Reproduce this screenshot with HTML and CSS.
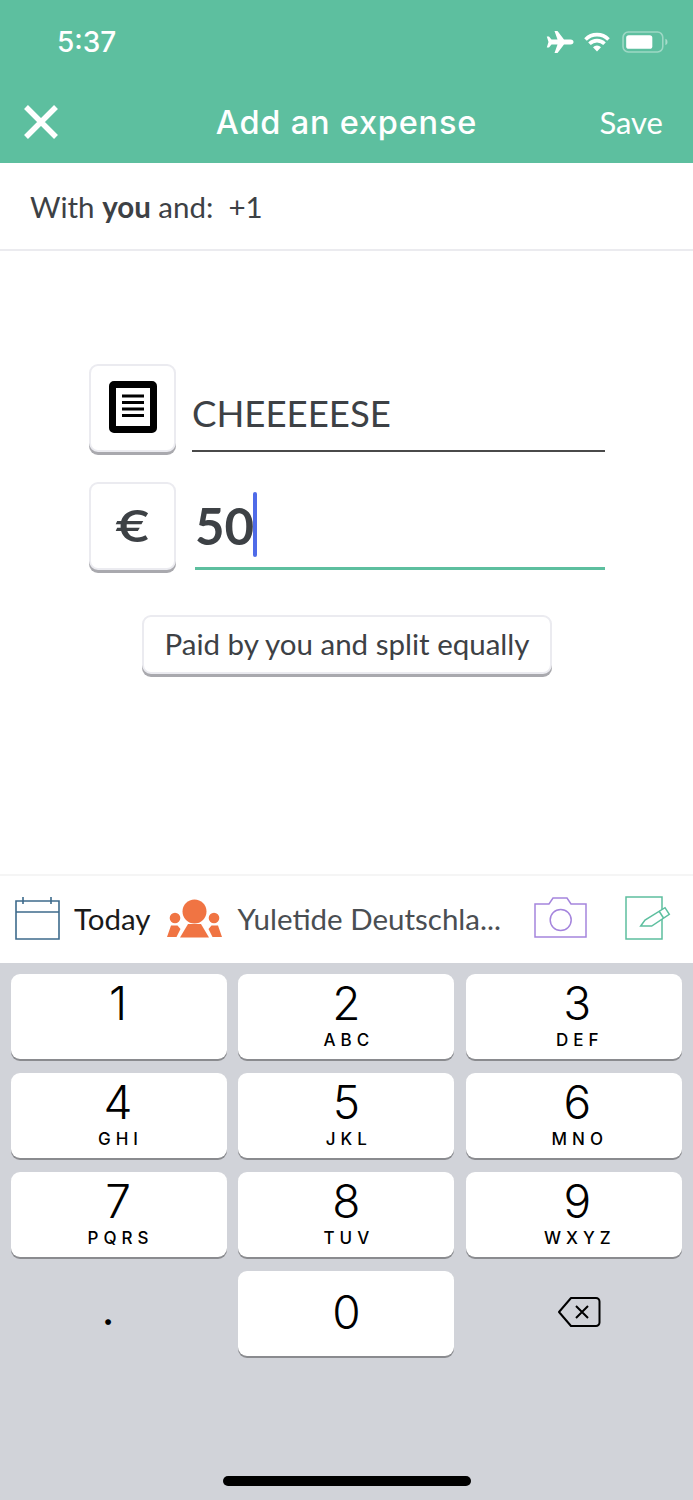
FILE: index.html
```html
<!DOCTYPE html>
<html lang="en">
<head>
  <meta charset="UTF-8" />
  <title>Add an expense</title>
  <link rel="stylesheet" href="styles.css">
</head>
<body>
  <div class="screen">
    <header class="top">
      <div class="status">
        <span class="time">5:37</span>
        <div class="status-icons">
          <svg class="plane" width="28" height="24" viewBox="0 0 28 24"><path d="M8.500 1h3l6.500 8.500h6.500c2 0 3 1.200 3 2.500s-1 2.500-3 2.500H18L11.500 23h-3l3-8.500H5.500L3 17.500H.8L2.500 12 .8 6.500H3L5.500 9.500h6z" fill="#fff"/></svg>
          <svg class="wifi" width="26" height="20" viewBox="0 0 26 20"><path d="M1.500 7.500a16 16 0 0 1 23 0M5.500 11.800a10.500 10.500 0 0 1 15 0" fill="none" stroke="#fff" stroke-width="3.600"/><path d="M13 19.500l-4-4.200a5.600 5.600 0 0 1 8 0z" fill="#fff"/></svg>
          <svg class="battery" width="46" height="22" viewBox="0 0 44 21"><rect x="1" y="1" width="38" height="19" rx="5" fill="none" stroke="#fff" stroke-opacity=".4" stroke-width="1.500"/><rect x="4" y="4" width="25" height="13" rx="2.500" fill="#fff"/><path d="M41.500 7.500c1.500.5 2 1.700 2 3s-.5 2.500-2 3z" fill="#fff" fill-opacity=".45"/></svg>
        </div>
      </div>
      <div class="navbar">
        <svg class="close" width="36" height="36" viewBox="0 0 36 36"><path d="M3 3l30 30M33 3L3 33" stroke="#fff" stroke-width="5.500" fill="none"/></svg>
        <h1>Add an expense</h1>
        <span class="save">Save</span>
      </div>
    </header>

    <div class="with-row"><span>With <b>you</b> and:&nbsp; +1</span></div>

    <main class="form">
      <div class="field-row desc-row">
        <div class="icon-btn doc">
          <svg width="48" height="52" viewBox="0 0 48 52"><rect x="3.500" y="3.500" width="41" height="45" rx="1.500" fill="#fff" stroke="#000" stroke-width="7"/><path d="M13 15h22M13 21.500h22M13 28h22M13 34.500h22" stroke="#000" stroke-width="2.800"/></svg>
        </div>
        <div class="input desc-input">CHEEEEESE</div>
      </div>
      <div class="field-row amount-row">
        <div class="icon-btn euro"><span>€</span></div>
        <div class="input amount-input"><span>50</span><i class="caret"></i></div>
      </div>
      <div class="split-btn">Paid by you and split equally</div>
    </main>

    <div class="toolbar">
      <svg class="cal" width="45" height="43" viewBox="0 0 45 43"><path d="M1 4h43v38H1zM1 15h43M8 0v7M36 0v7" fill="none" stroke="#3e6b8c" stroke-width="1.600"/></svg>
      <span class="today">Today</span>
      <svg class="group" width="55" height="39" viewBox="0 0 55 39"><g fill="#f07443"><circle cx="27.500" cy="12.500" r="12"/><circle cx="8" cy="19" r="5.300"/><circle cx="47" cy="19" r="5.300"/><path d="M21 25h13l8 13.500H13z"/><path d="M4 26.500h6.500l3 3.500-4 8H0zM44.500 26.500H51l4 11.500h-9.500l-4-8z"/></g></svg>
      <span class="group-name">Yuletide Deutschla...</span>
      <svg class="camera" width="53" height="42" viewBox="0 0 53 42"><path d="M1 7h14l4-6h14l4 6h15v33H1z" fill="none" stroke="#a585dd" stroke-width="1.500"/><circle cx="26.700" cy="23" r="10.500" fill="none" stroke="#a585dd" stroke-width="1.500"/></svg>
      <svg class="note" width="46" height="44" viewBox="0 0 46 44"><path d="M1 1h36v42H1z" fill="none" stroke="#5dbf9f" stroke-width="1.500"/><path d="M15.700 30l4.300-6 20-12.300 4.300 6.600L26.700 30z" fill="#fff" stroke="#5dbf9f" stroke-width="1.500"/><path d="M34 15l4.500 7" stroke="#5dbf9f" stroke-width="1.500"/></svg>
    </div>

    <section class="keyboard">
      <div class="keys">
        <div class="key"><span class="num">1</span></div>
        <div class="key"><span class="num">2</span><span class="abc">ABC</span></div>
        <div class="key"><span class="num">3</span><span class="abc">DEF</span></div>
        <div class="key"><span class="num">4</span><span class="abc">GHI</span></div>
        <div class="key"><span class="num">5</span><span class="abc">JKL</span></div>
        <div class="key"><span class="num">6</span><span class="abc">MNO</span></div>
        <div class="key"><span class="num">7</span><span class="abc">PQRS</span></div>
        <div class="key"><span class="num">8</span><span class="abc">TUV</span></div>
        <div class="key"><span class="num">9</span><span class="abc">WXYZ</span></div>
        <div class="key blank dot-key"><span class="dot">.</span></div>
        <div class="key zero"><span class="num">0</span></div>
        <div class="key blank back-key">
          <svg width="44" height="32" viewBox="0 0 44 32"><path d="M14 2h25a3.500 3.500 0 0 1 3.500 3.500v21a3.500 3.500 0 0 1-3.500 3.500H14L2 16z" fill="none" stroke="#000" stroke-width="2" stroke-linejoin="round"/><path d="M19 10l12 12M31 10L19 22" stroke="#000" stroke-width="2"/></svg>
        </div>
      </div>
      <div class="home-bar"></div>
    </section>
  </div>
</body>
</html>
```

FILE: styles.css
```css
* {
  box-sizing: border-box;
}
body {
  margin: 0;
  font-family: 'Lato', sans-serif;
  color: #3d4145;
  background: #fff;
}
.screen {
  width: 693px;
  height: 1500px;
  display: flex;
  flex-direction: column;
  overflow: hidden;
}
.top {
  height: 163px;
  background: #5dbf9f;
  color: #fff;
}
.status {
  height: 84px;
  padding: 24px 25px 0 57px;
  display: flex;
  justify-content: space-between;
  align-items: flex-start;
}
.time {
  font-family: 'Inter', sans-serif;
  font-size: 28px;
  font-weight: 500;
  line-height: 36px;
}
.status-icons {
  display: flex;
  align-items: center;
  height: 36px;
}
.wifi {
  margin: 0 12px 0 10px;
}
.navbar {
  display: grid;
  grid-template-columns: 1fr auto 1fr;
  align-items: center;
  padding: 0 30px;
  height: 76px;
}
.close {
  margin-left: -7px;
}
.navbar h1 {
  margin: 0;
  font-family: 'Inter', sans-serif;
  font-size: 32.500px;
  font-weight: 500;
  letter-spacing: 0.8px;
}
.save {
  font-size: 31px;
  text-align: right;
}
.with-row {
  height: 88px;
  padding: 0 30px;
  display: flex;
  align-items: center;
  font-size: 29.500px;
  border-bottom: 2px solid #ebebef;
}
.form {
  flex: 1;
  padding: 113px 88px 0 89px;
}
.field-row {
  display: flex;
  align-items: stretch;
  height: 88px;
}
.desc-row {
  gap: 16px;
  margin-bottom: 30px;
}
.amount-row {
  gap: 19px;
  margin-bottom: 45px;
}
.icon-btn {
  width: 87px;
  flex: none;
  display: flex;
  align-items: center;
  justify-content: center;
  background: #fff;
  border: 2px solid #ebebf0;
  border-radius: 9px;
  box-shadow: 0 3px 0 #a9a9ae;
}
.doc {
  padding-bottom: 2px;
}
.euro {
  font-family: 'Inter', sans-serif;
  font-size: 44px;
  font-weight: 500;
}
.euro span {
  transform: scaleX(1.25);
}
.input {
  flex: 1;
  display: flex;
  align-items: flex-end;
}
.desc-input {
  font-size: 36.600px;
  line-height: 52px;
  padding-bottom: 11px;
  border-bottom: 2px solid #4a4a4a;
}
.amount-input {
  font-size: 51px;
  font-weight: 700;
  line-height: 64px;
  padding-bottom: 9px;
  border-bottom: 3px solid #5dbf9f;
}
.caret {
  width: 4px;
  height: 65px;
  background: #4f6be8;
  border-radius: 2px;
  margin-left: -1px;
  margin-bottom: 1px;
}
.split-btn {
  width: 410px;
  height: 59px;
  margin: 0 auto;
  padding-bottom: 2px;
  display: flex;
  align-items: center;
  justify-content: center;
  font-size: 29.500px;
  background: #fff;
  border: 2px solid #ebebf0;
  border-radius: 9px;
  box-shadow: 0 3px 0 #a9a9ae;
}
.toolbar {
  height: 89px;
  border-top: 2px solid #f5f5f5;
  display: flex;
  align-items: center;
  padding: 0 22px 3px 15px;
  font-size: 29.500px;
  white-space: nowrap;
}
.today {
  margin-left: 14px;
  color: #1a1a1a;
}
.group {
  margin-left: 16px;
}
.group-name {
  margin-left: 16px;
  flex: 1;
  color: #4a4e52;
}
.note {
  margin-left: 38px;
}
.keyboard {
  height: 537px;
  background: #d1d3d9;
  padding: 11px 11px 0;
  position: relative;
}
.keys {
  display: grid;
  grid-template-columns: 216px 216px 216px;
  grid-auto-rows: 85px;
  column-gap: 11.400px;
  row-gap: 14px;
}
.key {
  display: flex;
  flex-direction: column;
  align-items: center;
  background: #fff;
  border-radius: 9px;
  box-shadow: 0 2px 0 #8a8b8f;
  color: #000;
  font-family: 'Inter', sans-serif;
}
.key:nth-child(3n) {
  padding-left: 7px;
}
.key:nth-child(3n+1) {
  padding-right: 2px;
}
.num {
  font-size: 46px;
  font-weight: 300;
  line-height: 58px;
}
.abc {
  font-size: 17px;
  font-weight: 500;
  letter-spacing: 5px;
  line-height: 16px;
  margin-right: -5px;
}
.zero {
  justify-content: center;
  padding-bottom: 3px;
}
.blank {
  background: none;
  box-shadow: none;
  justify-content: center;
  padding-bottom: 3px;
}
.key.dot-key {
  padding-right: 22px;
  padding-bottom: 10px;
}
.key.back-key {
  padding-left: 11px;
}
.dot {
  font-size: 44px;
  font-weight: 400;
  line-height: 58px;
}
.home-bar {
  position: absolute;
  left: 223px;
  bottom: 14px;
  width: 248px;
  height: 10px;
  border-radius: 5px;
  background: #000;
}
```
